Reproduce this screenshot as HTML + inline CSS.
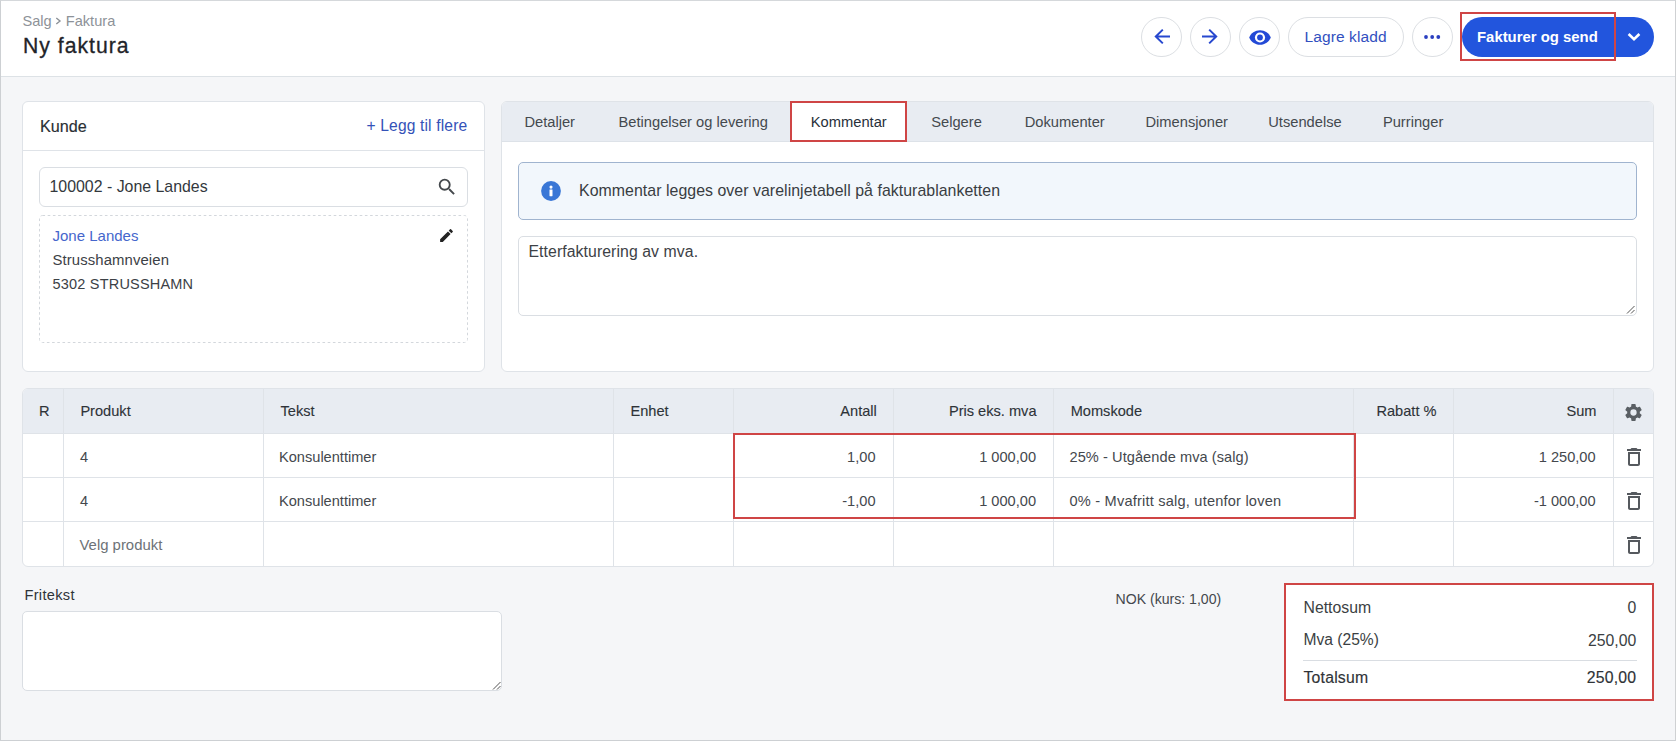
<!DOCTYPE html>
<html><head><meta charset="utf-8"><style>
*{box-sizing:border-box;margin:0;padding:0}
html,body{width:1676px;height:741px;overflow:hidden}
body{background:#f5f6f8;font-family:"Liberation Sans",sans-serif;color:#33383d;position:relative}
.t{position:absolute;white-space:nowrap;z-index:10}
.abs{position:absolute}
.box{position:absolute;box-sizing:border-box}
.cbtn{position:absolute;top:17px;width:41px;height:40px;border:1px solid #dcdfe3;border-radius:21px;background:#fff}
.redbox{position:absolute;border:2px solid #cf4545;z-index:40}
.vl{position:absolute;width:1px;background:#dfe3e8}
.hl{position:absolute;height:1px;background:#dfe3e8}
</style></head><body>
<div class="box" style="left:0;top:0;width:1676px;height:741px;border-left:1px solid #cdd0d3;border-top:1px solid #d5d8db;border-right:1px solid #cfd1d3;border-bottom:1px solid #cdd0d3;z-index:60"></div>
<div class="box" style="left:0;top:0;width:1676px;height:77px;background:#fff;border-bottom:1px solid #dde2e6"></div>
<svg class="abs" style="left:55px;top:17px;z-index:11" width="7" height="8" viewBox="0 0 7 8"><path d="M1.3 1L5 4L1.3 7" fill="none" stroke="#8d9298" stroke-width="1.4"/></svg>
<div class="cbtn" style="left:1141px"><svg class="abs" style="left:12px;top:10.4px" width="17" height="17" viewBox="0 0 17 17"><path d="M16 8.5H2M8.8 1.6L1.8 8.5L8.8 15.4" fill="none" stroke="#2748cf" stroke-width="2"/></svg></div>
<div class="cbtn" style="left:1190px"><svg class="abs" style="left:9.6px;top:10.4px" width="17" height="17" viewBox="0 0 17 17"><path d="M1 8.5H15M8.2 1.6L15.2 8.5L8.2 15.4" fill="none" stroke="#2748cf" stroke-width="2"/></svg></div>
<div class="cbtn" style="left:1239px"><svg class="abs" style="left:8.7px;top:11.5px" width="22" height="15" viewBox="0 0 22 15"><path d="M11 0.2C6.1 0.2 1.9 3.2 0.2 7.5C1.9 11.8 6.1 14.8 11 14.8S20.1 11.8 21.8 7.5C20.1 3.2 15.9 0.2 11 0.2Z" fill="#2349d6"/><circle cx="11" cy="7.5" r="5.1" fill="#fff"/><circle cx="11" cy="7.5" r="2.9" fill="#2349d6"/></svg></div>
<div class="cbtn" style="left:1288px;width:116px"></div>
<div class="cbtn" style="left:1412px"><svg class="abs" style="left:9.6px;top:16px" width="18" height="6" viewBox="0 0 18 6"><circle cx="3" cy="3" r="1.9" fill="#2a3fc0"/><circle cx="9.2" cy="3" r="1.9" fill="#2a3fc0"/><circle cx="15.3" cy="3" r="1.9" fill="#2a3fc0"/></svg></div>
<div class="box" style="left:1462px;top:17px;width:192px;height:40px;border-radius:20px;background:#2255dd"></div>
<svg class="abs" style="left:1627px;top:32px;z-index:11" width="14" height="10" viewBox="0 0 14 10"><path d="M1.6 2L7 7.2L12.4 2" fill="none" stroke="#fff" stroke-width="2.6"/></svg>
<div class="redbox" style="left:1460px;top:12px;width:156px;height:49px"></div>
<div class="box" style="left:22px;top:101px;width:463px;height:271px;background:#fff;border:1px solid #dfe3e8;border-radius:6px"></div>
<div class="hl" style="left:23px;top:150px;width:461px"></div>
<div class="box" style="left:39px;top:167px;width:429px;height:40px;border:1px solid #dadee3;border-radius:6px;background:#fff"></div>
<svg class="abs" style="left:435.8px;top:176px;z-index:11" width="22" height="22" viewBox="0 0 24 24"><path d="M15.5 14h-.79l-.28-.27A6.47 6.47 0 0 0 16 9.5 6.5 6.5 0 1 0 9.5 16c1.61 0 3.09-.59 4.23-1.57l.27.28v.79l5 4.99L20.49 19l-4.99-5zm-6 0C7.01 14 5 11.99 5 9.5S7.01 5 9.5 5 14 7.01 14 9.5 11.99 14 9.5 14z" fill="#44484c"/></svg>
<svg class="abs" style="left:39px;top:215px" width="429" height="128"><rect x="0.5" y="0.5" width="428" height="127" rx="3" fill="#fff" stroke="#d3d7dc" stroke-width="1" stroke-dasharray="2.6 2.6"/></svg>
<svg class="abs" style="left:438px;top:227px;z-index:11" width="17" height="17" viewBox="0 0 24 24"><path d="M3 17.25V21h3.75L17.81 9.94l-3.75-3.75L3 17.25zM20.71 7.04a1 1 0 0 0 0-1.41l-2.34-2.34a1 1 0 0 0-1.41 0l-1.83 1.83 3.75 3.75 1.83-1.83z" fill="#222"/></svg>
<div class="box" style="left:501px;top:101px;width:1153px;height:271px;background:#fff;border:1px solid #dfe3e8;border-radius:6px;overflow:hidden"><div class="abs" style="left:0;top:0;width:1151px;height:40px;background:#e8ecf2;border-bottom:1px solid #dde2e8"></div><div class="abs" style="left:289px;top:0;width:116px;height:41px;background:#fff"></div></div>
<div class="redbox" style="left:790px;top:101px;width:117px;height:41px"></div>
<div class="box" style="left:518px;top:162px;width:1119px;height:58px;background:#f2f7fc;border:1px solid #a0b4cf;border-radius:5px"></div>
<svg class="abs" style="left:540.6px;top:181px;z-index:11" width="20" height="20" viewBox="0 0 20 20"><circle cx="10" cy="10" r="9.9" fill="#3a77d6"/><rect x="8.5" y="8.4" width="3" height="6.8" rx="0.4" fill="#fff"/><circle cx="10" cy="6.1" r="1.55" fill="#fff"/></svg>
<div class="box" style="left:518px;top:236px;width:1119px;height:80px;background:#fff;border:1px solid #dadee3;border-radius:5px"></div>
<svg class="abs" style="left:1626px;top:305px;z-index:11" width="9" height="9" viewBox="0 0 9 9"><path d="M8.5 1L1 8.5M8.5 5L5 8.5" stroke="#555" stroke-width="1"/></svg>
<div class="box" style="left:22px;top:388px;width:1632px;height:179px;background:#fff;border:1px solid #dfe3e8;border-radius:6px;overflow:hidden"><div class="abs" style="left:0;top:0;width:100%;height:45px;background:#e8ecf2"></div></div>
<div class="hl" style="left:23px;top:433px;width:1630px"></div>
<div class="hl" style="left:23px;top:477px;width:1630px"></div>
<div class="hl" style="left:23px;top:521px;width:1630px"></div>
<div class="vl" style="left:63px;top:389px;height:177px"></div>
<div class="vl" style="left:263px;top:389px;height:177px"></div>
<div class="vl" style="left:613px;top:389px;height:177px"></div>
<div class="vl" style="left:733px;top:389px;height:177px"></div>
<div class="vl" style="left:893px;top:389px;height:177px"></div>
<div class="vl" style="left:1053px;top:389px;height:177px"></div>
<div class="vl" style="left:1353px;top:389px;height:177px"></div>
<div class="vl" style="left:1453px;top:389px;height:177px"></div>
<div class="vl" style="left:1613px;top:389px;height:177px"></div>
<svg class="abs" style="left:1622.9px;top:401.5px;z-index:11" width="21" height="21" viewBox="0 0 24 24"><path d="M19.14 12.94c.04-.3.06-.61.06-.94 0-.32-.02-.64-.07-.94l2.03-1.58a.49.49 0 0 0 .12-.61l-1.92-3.32a.49.49 0 0 0-.59-.22l-2.39.96c-.5-.38-1.03-.7-1.62-.94l-.36-2.54a.48.48 0 0 0-.48-.41h-3.84c-.24 0-.43.17-.47.41l-.36 2.54c-.59.24-1.13.57-1.62.94l-2.39-.96a.49.49 0 0 0-.59.22L2.74 8.87c-.12.21-.08.47.12.61l2.03 1.58c-.05.3-.09.63-.09.94s.02.64.07.94l-2.03 1.58a.49.49 0 0 0-.12.61l1.92 3.32c.12.22.37.29.59.22l2.39-.96c.5.38 1.03.7 1.62.94l.36 2.54c.05.24.24.41.48.41h3.84c.24 0 .44-.17.47-.41l.36-2.54c.59-.24 1.13-.56 1.62-.94l2.39.96c.22.08.47 0 .59-.22l1.92-3.32c.12-.22.07-.47-.12-.61l-2.01-1.58zM12 15.6A3.6 3.6 0 1 1 12 8.4a3.6 3.6 0 0 1 0 7.2z" fill="#5a5f64"/></svg>
<svg class="abs" style="left:1621.5px;top:444.8px;z-index:11" width="24" height="24" viewBox="0 0 24 24"><path d="M6 19c0 1.1.9 2 2 2h8c1.1 0 2-.9 2-2V7H6v12zM8 9h8v10H8V9zm7.5-5l-1-1h-5l-1 1H5v2h14V4h-3.5z" fill="#55595e"/></svg>
<svg class="abs" style="left:1621.5px;top:488.8px;z-index:11" width="24" height="24" viewBox="0 0 24 24"><path d="M6 19c0 1.1.9 2 2 2h8c1.1 0 2-.9 2-2V7H6v12zM8 9h8v10H8V9zm7.5-5l-1-1h-5l-1 1H5v2h14V4h-3.5z" fill="#55595e"/></svg>
<svg class="abs" style="left:1621.5px;top:532.8px;z-index:11" width="24" height="24" viewBox="0 0 24 24"><path d="M6 19c0 1.1.9 2 2 2h8c1.1 0 2-.9 2-2V7H6v12zM8 9h8v10H8V9zm7.5-5l-1-1h-5l-1 1H5v2h14V4h-3.5z" fill="#55595e"/></svg>
<div class="redbox" style="left:733px;top:433px;width:623px;height:86px"></div>
<div class="box" style="left:22px;top:611px;width:480px;height:80px;background:#fff;border:1px solid #dadee3;border-radius:5px"></div>
<svg class="abs" style="left:492px;top:681px;z-index:11" width="9" height="9" viewBox="0 0 9 9"><path d="M8.5 1L1 8.5M8.5 5L5 8.5" stroke="#555" stroke-width="1"/></svg>
<div class="box" style="left:1286px;top:585px;width:367px;height:115px;background:#fff"></div>
<div class="hl" style="left:1303px;top:660px;width:334px;background:#d9dde2"></div>
<div class="redbox" style="left:1284px;top:583px;width:370px;height:118px"></div>
<div class="t" style="left:22.5px;top:11.94px;font-size:14.6px;line-height:18px;color:#8d9298;font-weight:400;">Salg</div>
<div class="t" style="left:65.8px;top:11.94px;font-size:14.6px;line-height:18px;color:#8d9298;font-weight:400;">Faktura</div>
<div class="t" style="left:23px;top:33.05px;font-size:21.2px;line-height:26px;color:#1f2429;font-weight:400;letter-spacing:1.0px;-webkit-text-stroke:0.3px currentColor;">Ny faktura</div>
<div class="t" style="left:1304.5px;top:27.43px;font-size:15.5px;line-height:19px;color:#3250c0;font-weight:400;letter-spacing:0.1px;">Lagre kladd</div>
<div class="t" style="left:1477px;top:28.04px;font-size:14.9px;line-height:19px;color:#ffffff;font-weight:700;">Fakturer og send</div>
<div class="t" style="left:40px;top:116.39px;font-size:16.2px;line-height:20px;color:#2a2f34;font-weight:400;-webkit-text-stroke:0.15px currentColor;">Kunde</div>
<div class="t" style="right:1208.7px;text-align:right;top:115.79px;font-size:15.6px;line-height:20px;color:#3452b8;font-weight:400;letter-spacing:0.15px;">+ Legg til flere</div>
<div class="t" style="left:49.5px;top:176.69px;font-size:15.9px;line-height:20px;color:#33383d;font-weight:400;">100002 - Jone Landes</div>
<div class="t" style="left:52.5px;top:226.30px;font-size:15px;line-height:19px;color:#4566cc;font-weight:400;">Jone Landes</div>
<div class="t" style="left:52.5px;top:250.54px;font-size:14.9px;line-height:19px;color:#3c4146;font-weight:400;letter-spacing:0.1px;">Strusshamnveien</div>
<div class="t" style="left:52.5px;top:274.98px;font-size:14.5px;line-height:18px;color:#3c4146;font-weight:400;letter-spacing:0.2px;">5302 STRUSSHAMN</div>
<div class="t" style="left:524.4px;top:112.91px;font-size:14.7px;line-height:18px;color:#44494e;font-weight:400;">Detaljer</div>
<div class="t" style="left:618.5px;top:112.91px;font-size:14.7px;line-height:18px;color:#44494e;font-weight:400;">Betingelser og levering</div>
<div class="t" style="left:810.8px;top:112.91px;font-size:14.7px;line-height:18px;color:#28303a;font-weight:400;">Kommentar</div>
<div class="t" style="left:931.2px;top:112.91px;font-size:14.7px;line-height:18px;color:#44494e;font-weight:400;">Selgere</div>
<div class="t" style="left:1024.7px;top:112.91px;font-size:14.7px;line-height:18px;color:#44494e;font-weight:400;">Dokumenter</div>
<div class="t" style="left:1145.5px;top:112.91px;font-size:14.7px;line-height:18px;color:#44494e;font-weight:400;">Dimensjoner</div>
<div class="t" style="left:1268.2px;top:112.91px;font-size:14.7px;line-height:18px;color:#44494e;font-weight:400;">Utsendelse</div>
<div class="t" style="left:1382.9px;top:112.91px;font-size:14.7px;line-height:18px;color:#44494e;font-weight:400;">Purringer</div>
<div class="t" style="left:579px;top:180.69px;font-size:15.9px;line-height:20px;color:#393d42;font-weight:400;letter-spacing:0.04px;">Kommentar legges over varelinjetabell p&aring; fakturablanketten</div>
<div class="t" style="left:528.5px;top:241.73px;font-size:15.8px;line-height:20px;color:#3d4146;font-weight:400;letter-spacing:0.08px;">Etterfakturering av mva.</div>
<div class="t" style="left:39px;top:401.94px;font-size:14.6px;line-height:18px;color:#2e3338;font-weight:400;-webkit-text-stroke:0.12px currentColor;">R</div>
<div class="t" style="left:80.4px;top:401.94px;font-size:14.6px;line-height:18px;color:#2e3338;font-weight:400;-webkit-text-stroke:0.12px currentColor;">Produkt</div>
<div class="t" style="left:280.5px;top:401.94px;font-size:14.6px;line-height:18px;color:#2e3338;font-weight:400;-webkit-text-stroke:0.12px currentColor;">Tekst</div>
<div class="t" style="left:630.5px;top:401.94px;font-size:14.6px;line-height:18px;color:#2e3338;font-weight:400;-webkit-text-stroke:0.12px currentColor;">Enhet</div>
<div class="t" style="right:799.2px;text-align:right;top:401.94px;font-size:14.6px;line-height:18px;color:#2e3338;font-weight:400;-webkit-text-stroke:0.12px currentColor;">Antall</div>
<div class="t" style="right:639.5px;text-align:right;top:401.94px;font-size:14.6px;line-height:18px;color:#2e3338;font-weight:400;-webkit-text-stroke:0.12px currentColor;">Pris eks. mva</div>
<div class="t" style="left:1070.7px;top:401.94px;font-size:14.6px;line-height:18px;color:#2e3338;font-weight:400;-webkit-text-stroke:0.12px currentColor;">Momskode</div>
<div class="t" style="right:239.5px;text-align:right;top:401.94px;font-size:14.6px;line-height:18px;color:#2e3338;font-weight:400;-webkit-text-stroke:0.12px currentColor;">Rabatt %</div>
<div class="t" style="right:79.5px;text-align:right;top:401.94px;font-size:14.6px;line-height:18px;color:#2e3338;font-weight:400;-webkit-text-stroke:0.12px currentColor;">Sum</div>
<div class="t" style="left:80px;top:448.24px;font-size:14.6px;line-height:18px;color:#44484d;font-weight:400;">4</div>
<div class="t" style="left:279px;top:448.24px;font-size:14.6px;line-height:18px;color:#44484d;font-weight:400;">Konsulenttimer</div>
<div class="t" style="right:800.5px;text-align:right;top:448.24px;font-size:14.6px;line-height:18px;color:#44484d;font-weight:400;">1,00</div>
<div class="t" style="right:640px;text-align:right;top:448.24px;font-size:14.6px;line-height:18px;color:#44484d;font-weight:400;">1 000,00</div>
<div class="t" style="left:1069.5px;top:448.24px;font-size:14.6px;line-height:18px;color:#44484d;font-weight:400;letter-spacing:0.06px;">25% - Utg&aring;ende mva (salg)</div>
<div class="t" style="right:80.40000000000009px;text-align:right;top:448.24px;font-size:14.6px;line-height:18px;color:#44484d;font-weight:400;">1 250,00</div>
<div class="t" style="left:80px;top:491.94px;font-size:14.6px;line-height:18px;color:#44484d;font-weight:400;">4</div>
<div class="t" style="left:279px;top:491.94px;font-size:14.6px;line-height:18px;color:#44484d;font-weight:400;">Konsulenttimer</div>
<div class="t" style="right:800.5px;text-align:right;top:491.94px;font-size:14.6px;line-height:18px;color:#44484d;font-weight:400;">-1,00</div>
<div class="t" style="right:640px;text-align:right;top:491.94px;font-size:14.6px;line-height:18px;color:#44484d;font-weight:400;">1 000,00</div>
<div class="t" style="left:1069.5px;top:491.94px;font-size:14.6px;line-height:18px;color:#44484d;font-weight:400;letter-spacing:0.2px;">0% - Mvafritt salg, utenfor loven</div>
<div class="t" style="right:80.40000000000009px;text-align:right;top:491.94px;font-size:14.6px;line-height:18px;color:#44484d;font-weight:400;">-1 000,00</div>
<div class="t" style="left:79.5px;top:536.34px;font-size:14.9px;line-height:19px;color:#6d7277;font-weight:400;">Velg produkt</div>
<div class="t" style="left:24.5px;top:585.94px;font-size:14.6px;line-height:18px;color:#2e3338;font-weight:400;letter-spacing:0.3px;">Fritekst</div>
<div class="t" style="left:1115.5px;top:590.21px;font-size:14.1px;line-height:18px;color:#44484d;font-weight:400;">NOK (kurs: 1,00)</div>
<div class="t" style="left:1303.5px;top:597.83px;font-size:15.8px;line-height:20px;color:#3b3f43;font-weight:400;">Nettosum</div>
<div class="t" style="right:39.700000000000045px;text-align:right;top:597.83px;font-size:15.8px;line-height:20px;color:#3b3f43;font-weight:400;">0</div>
<div class="t" style="left:1303.5px;top:629.59px;font-size:15.6px;line-height:20px;color:#3b3f43;font-weight:400;">Mva (25%)</div>
<div class="t" style="right:39.700000000000045px;text-align:right;top:630.53px;font-size:15.8px;line-height:20px;color:#3b3f43;font-weight:400;">250,00</div>
<div class="t" style="left:1303.5px;top:667.93px;font-size:15.8px;line-height:20px;color:#2f3337;font-weight:400;letter-spacing:0.2px;-webkit-text-stroke:0.15px currentColor;">Totalsum</div>
<div class="t" style="right:39.700000000000045px;text-align:right;top:667.93px;font-size:15.8px;line-height:20px;color:#2f3337;font-weight:400;letter-spacing:0.2px;-webkit-text-stroke:0.15px currentColor;">250,00</div>
</body></html>
